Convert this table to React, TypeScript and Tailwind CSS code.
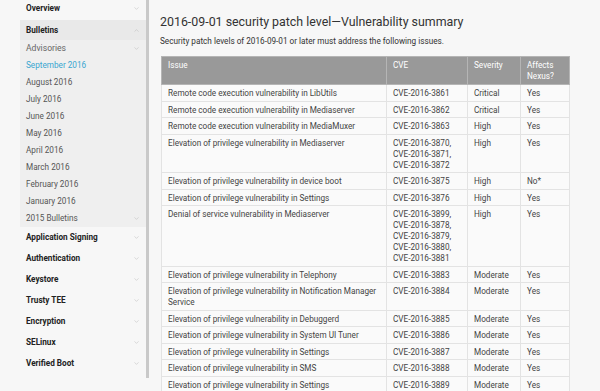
import { ChevronDown, ChevronUp } from 'lucide-react';

const months = ['September 2016', 'August 2016', 'July 2016', 'June 2016', 'May 2016', 'April 2016', 'March 2016', 'February 2016', 'January 2016'];
const sections = ['Application Signing', 'Authentication', 'Keystore', 'Trusty TEE', 'Encryption', 'SELinux', 'Verified Boot'];

const rows = [
  { issue: ['Remote code execution vulnerability in LibUtils'], cve: ['CVE-2016-3861'], sev: 'Critical', nexus: 'Yes' },
  { issue: ['Remote code execution vulnerability in Mediaserver'], cve: ['CVE-2016-3862'], sev: 'Critical', nexus: 'Yes' },
  { issue: ['Remote code execution vulnerability in MediaMuxer'], cve: ['CVE-2016-3863'], sev: 'High', nexus: 'Yes' },
  { issue: ['Elevation of privilege vulnerability in Mediaserver'], cve: ['CVE-2016-3870,', 'CVE-2016-3871,', 'CVE-2016-3872'], sev: 'High', nexus: 'Yes' },
  { issue: ['Elevation of privilege vulnerability in device boot'], cve: ['CVE-2016-3875'], sev: 'High', nexus: 'No*' },
  { issue: ['Elevation of privilege vulnerability in Settings'], cve: ['CVE-2016-3876'], sev: 'High', nexus: 'Yes' },
  { issue: ['Denial of service vulnerability in Mediaserver'], cve: ['CVE-2016-3899,', 'CVE-2016-3878,', 'CVE-2016-3879,', 'CVE-2016-3880,', 'CVE-2016-3881'], sev: 'High', nexus: 'Yes' },
  { issue: ['Elevation of privilege vulnerability in Telephony'], cve: ['CVE-2016-3883'], sev: 'Moderate', nexus: 'Yes' },
  { issue: ['Elevation of privilege vulnerability in Notification Manager', 'Service'], cve: ['CVE-2016-3884'], sev: 'Moderate', nexus: 'Yes' },
  { issue: ['Elevation of privilege vulnerability in Debuggerd'], cve: ['CVE-2016-3885'], sev: 'Moderate', nexus: 'Yes' },
  { issue: ['Elevation of privilege vulnerability in System UI Tuner'], cve: ['CVE-2016-3886'], sev: 'Moderate', nexus: 'Yes' },
  { issue: ['Elevation of privilege vulnerability in Settings'], cve: ['CVE-2016-3887'], sev: 'Moderate', nexus: 'Yes' },
  { issue: ['Elevation of privilege vulnerability in SMS'], cve: ['CVE-2016-3888'], sev: 'Moderate', nexus: 'Yes' },
  { issue: ['Elevation of privilege vulnerability in Settings'], cve: ['CVE-2016-3889'], sev: 'Moderate', nexus: 'Yes' },
];

const td = 'border border-[#e3e3e3] pl-[6px] pr-[2px] pt-[3px] pb-[1.5px] align-top';
const th = 'border border-[#b5b5b5] pl-[6px] pr-[2px] pt-[3px] pb-[2px] align-top text-left font-normal';
const chev = 'text-[#b0b0b0] shrink-0';

export default function App() {
  return (
    <div className="h-[391px] w-[600px] overflow-hidden bg-[#f7f7f7] text-[#444] flex" style={{ fontFamily: 'Roboto, "Liberation Sans", sans-serif' }}>
      <aside className="w-[149px] pl-[20px] flex shrink-0">
        <nav className="w-[126px] text-[8.2px]">
          <div className="h-[16px] mb-[4px] px-[6px] flex items-center justify-between font-bold text-[#222]">
            Overview <ChevronDown size={7} strokeWidth={1.5} className={chev} />
          </div>
          <div className="bg-[#efefef]">
            <div className="h-[20px] px-[6px] flex items-center justify-between font-bold text-[#222] bg-[#e9e9e9]">
              Bulletins <ChevronUp size={7} strokeWidth={1.5} className={chev} />
            </div>
            <div className="h-[17px] px-[6px] flex items-center justify-between text-[#666] text-[8.6px]">
              Advisories <ChevronDown size={7} strokeWidth={1.5} className={chev} />
            </div>
            {months.map((m, i) => (
              <div key={m} className={`h-[17px] pl-[6px] flex items-center ${i === 0 ? 'text-[#39a6cf]' : 'text-[#555]'}`}>
                {m}
              </div>
            ))}
            <div className="h-[17px] px-[6px] flex items-center justify-between text-[#555]">
              2015 Bulletins <ChevronDown size={7} strokeWidth={1.5} className={chev} />
            </div>
          </div>
          {sections.map((s) => (
            <div key={s} className="h-[21px] px-[6px] flex items-center justify-between font-bold text-[#222]">
              {s} <ChevronDown size={7} strokeWidth={1.5} className={chev} />
            </div>
          ))}
        </nav>
        <div className="w-[3px] h-[378px] bg-[#c9c9c9]" />
      </aside>

      <main className="pl-[11px] pt-[14px] flex-1">
        <h1 className="text-[12.4px] leading-[15px] text-[#333] font-normal">2016-09-01 security patch level—Vulnerability summary</h1>
        <p className="mt-[7px] text-[8.2px] leading-[11px] text-[#333]">
          Security patch levels of 2016-09-01 or later must address the following issues.
        </p>
        <table className="mt-[9px] ml-[1px] w-[408px] table-fixed border-collapse text-[8.2px] leading-[11px] bg-[#fafafa]">
          <colgroup>
            <col className="w-[225px]" />
            <col className="w-[81px]" />
            <col className="w-[53px]" />
            <col className="w-[49px]" />
          </colgroup>
          <thead>
            <tr className="bg-[#999] text-white h-[27px]">
              <th className={th}>Issue</th>
              <th className={th}>CVE</th>
              <th className={th}>Severity</th>
              <th className={th}>Affects Nexus?</th>
            </tr>
          </thead>
          <tbody>
            {rows.map((r, i) => (
              <tr key={i}>
                <td className={td}>
                  {r.issue.map((l) => (
                    <div key={l} className="whitespace-nowrap">{l}</div>
                  ))}
                </td>
                <td className={td}>
                  {r.cve.map((c) => (
                    <div key={c}>{c}</div>
                  ))}
                </td>
                <td className={td}>{r.sev}</td>
                <td className={td}>{r.nexus}</td>
              </tr>
            ))}
          </tbody>
        </table>
      </main>
    </div>
  );
}
